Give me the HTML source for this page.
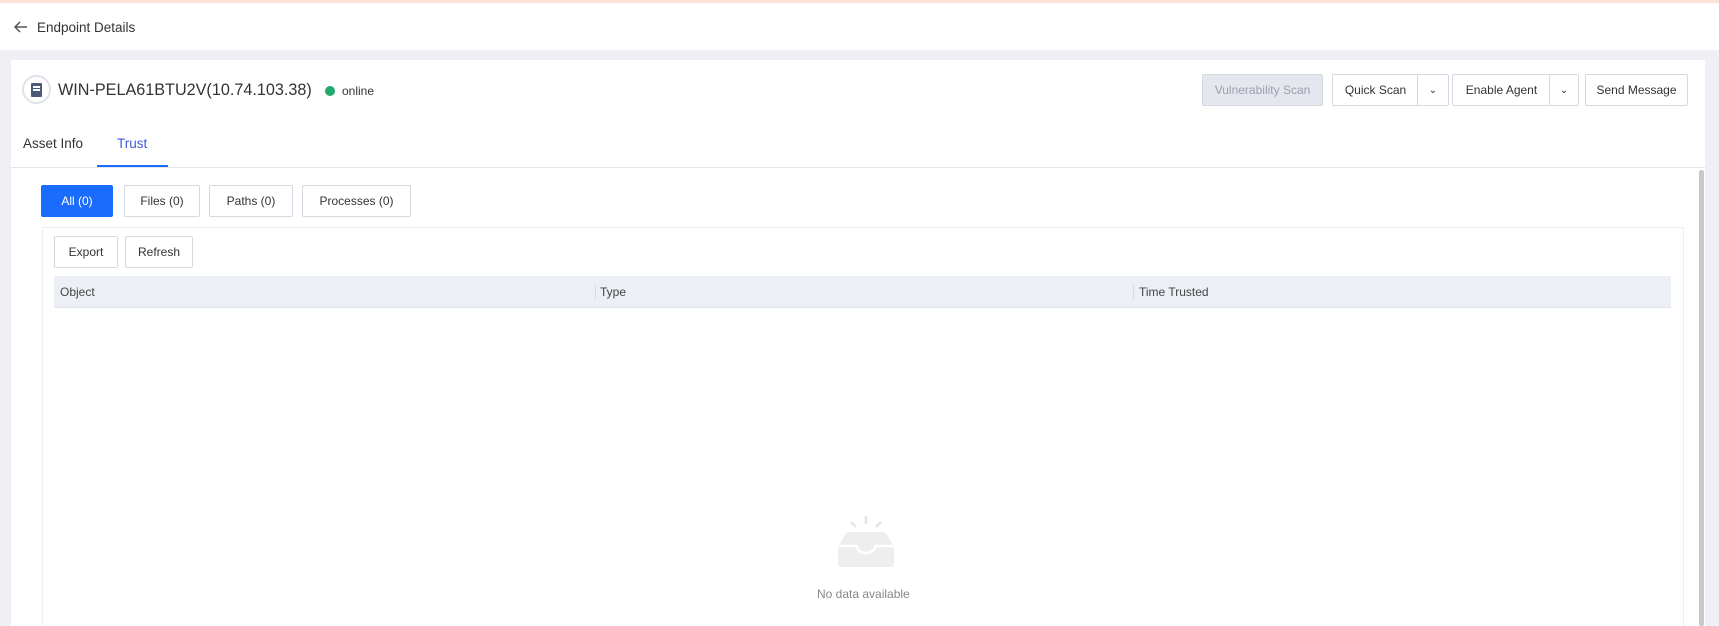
<!DOCTYPE html>
<html><head><meta charset="utf-8"><style>
*{box-sizing:border-box;margin:0;padding:0}
body{width:1719px;height:626px;overflow:hidden;background:#eef0f6;font-family:"Liberation Sans",Arial,sans-serif;color:#333;position:relative}
.a{position:absolute}
.btn{position:absolute;border:1px solid #d5d8de;border-radius:2px;background:#fff;font-size:12px;color:#333;display:flex;align-items:center;justify-content:center}
</style></head><body>
<div class="a" style="left:0;top:0;width:1719px;height:50px;background:#fff;border-top:3px solid #fbe3d6"></div>
<svg class="a" style="left:13px;top:20px" width="16" height="14" viewBox="0 0 16 14"><path d="M14 7H2M7 2L2 7l5 5" fill="none" stroke="#555" stroke-width="1.5"/></svg>
<div class="a" style="left:37px;top:20px;font-size:13.5px;color:#333">Endpoint Details</div>

<div class="a" style="left:11px;top:60px;width:1694px;height:566px;background:#fff"></div>
<div class="a" style="left:22px;top:75px;width:29px;height:29px;border-radius:50%;border:2px solid #dfe2e8;background:#fff"></div>
<div class="a" style="left:31px;top:83px;width:11px;height:14px;background:#4d5a75;border-radius:1px"></div>
<div class="a" style="left:33px;top:86px;width:7px;height:1.5px;background:#fff"></div>
<div class="a" style="left:33px;top:89px;width:7px;height:1.5px;background:#fff"></div>
<div class="a" style="left:58px;top:81px;font-size:16.2px;color:#333">WIN-PELA61BTU2V(10.74.103.38)</div>
<div class="a" style="left:325px;top:86px;width:10px;height:10px;border-radius:50%;background:#22a86b"></div>
<div class="a" style="left:342px;top:84px;font-size:12px;color:#333">online</div>

<div class="btn" style="left:1202px;top:74px;width:121px;height:32px;background:#e4e7ee;color:#9aa0ab">Vulnerability Scan</div>
<div class="btn" style="left:1332px;top:74px;width:86px;height:32px;border-right:none;border-radius:2px 0 0 2px">Quick Scan</div>
<div class="btn" style="left:1417px;top:74px;width:32px;height:32px;font-size:10px">&#8964;</div>
<div class="btn" style="left:1452px;top:74px;width:98px;height:32px;border-right:none">Enable Agent</div>
<div class="btn" style="left:1549px;top:74px;width:30px;height:32px;font-size:10px">&#8964;</div>
<div class="btn" style="left:1585px;top:74px;width:103px;height:32px">Send Message</div>

<div class="a" style="left:23px;top:136px;font-size:13.5px;color:#333">Asset Info</div>
<div class="a" style="left:117px;top:136px;font-size:13.5px;color:#3d5bd9">Trust</div>
<div class="a" style="left:11px;top:167px;width:1694px;height:1px;background:#e4e6eb"></div>
<div class="a" style="left:97px;top:165px;width:71px;height:2px;background:#1a6cff"></div>
<div class="a" style="left:1699px;top:170px;width:5px;height:456px;background:#c9c9c9;border-radius:2px"></div>

<div class="btn" style="left:41px;top:185px;width:72px;height:32px;background:#1a6cff;border-color:#1a6cff;color:#fff">All (0)</div>
<div class="btn" style="left:124px;top:185px;width:76px;height:32px">Files (0)</div>
<div class="btn" style="left:209px;top:185px;width:84px;height:32px">Paths (0)</div>
<div class="btn" style="left:302px;top:185px;width:109px;height:32px">Processes (0)</div>

<div class="a" style="left:42px;top:227px;width:1642px;height:399px;border:1px solid #eceef2;border-bottom:none"></div>
<div class="btn" style="left:54px;top:236px;width:64px;height:32px">Export</div>
<div class="btn" style="left:125px;top:236px;width:68px;height:32px">Refresh</div>
<div class="a" style="left:54px;top:276px;width:1617px;height:32px;background:#eceff6;border-bottom:1px solid #dfe2e9;font-size:12px;color:#444">
<span class="a" style="left:6px;top:9px">Object</span>
<span class="a" style="left:541px;top:8px;width:1px;height:16px;background:#d8dbe2"></span>
<span class="a" style="left:546px;top:9px">Type</span>
<span class="a" style="left:1079px;top:8px;width:1px;height:16px;background:#d8dbe2"></span>
<span class="a" style="left:1085px;top:9px">Time Trusted</span>
</div>

<svg class="a" style="left:834px;top:514px" width="64" height="56" viewBox="0 0 64 56">
<path d="M32 2v8M17 8l5 5M47 8l-5 5" stroke="#e6e6e6" stroke-width="2.5" fill="none"/>
<path d="M4 32l9-14h38l9 14v18a3 3 0 0 1-3 3H7a3 3 0 0 1-3-3z" fill="#eeeeee"/>
<path d="M4 32h19a9 7 0 0 0 18 0h19" fill="none" stroke="#fff" stroke-width="2.5"/>
</svg>
<div class="a" style="left:817px;top:587px;font-size:12px;color:#888">No data available</div>
</body></html>
